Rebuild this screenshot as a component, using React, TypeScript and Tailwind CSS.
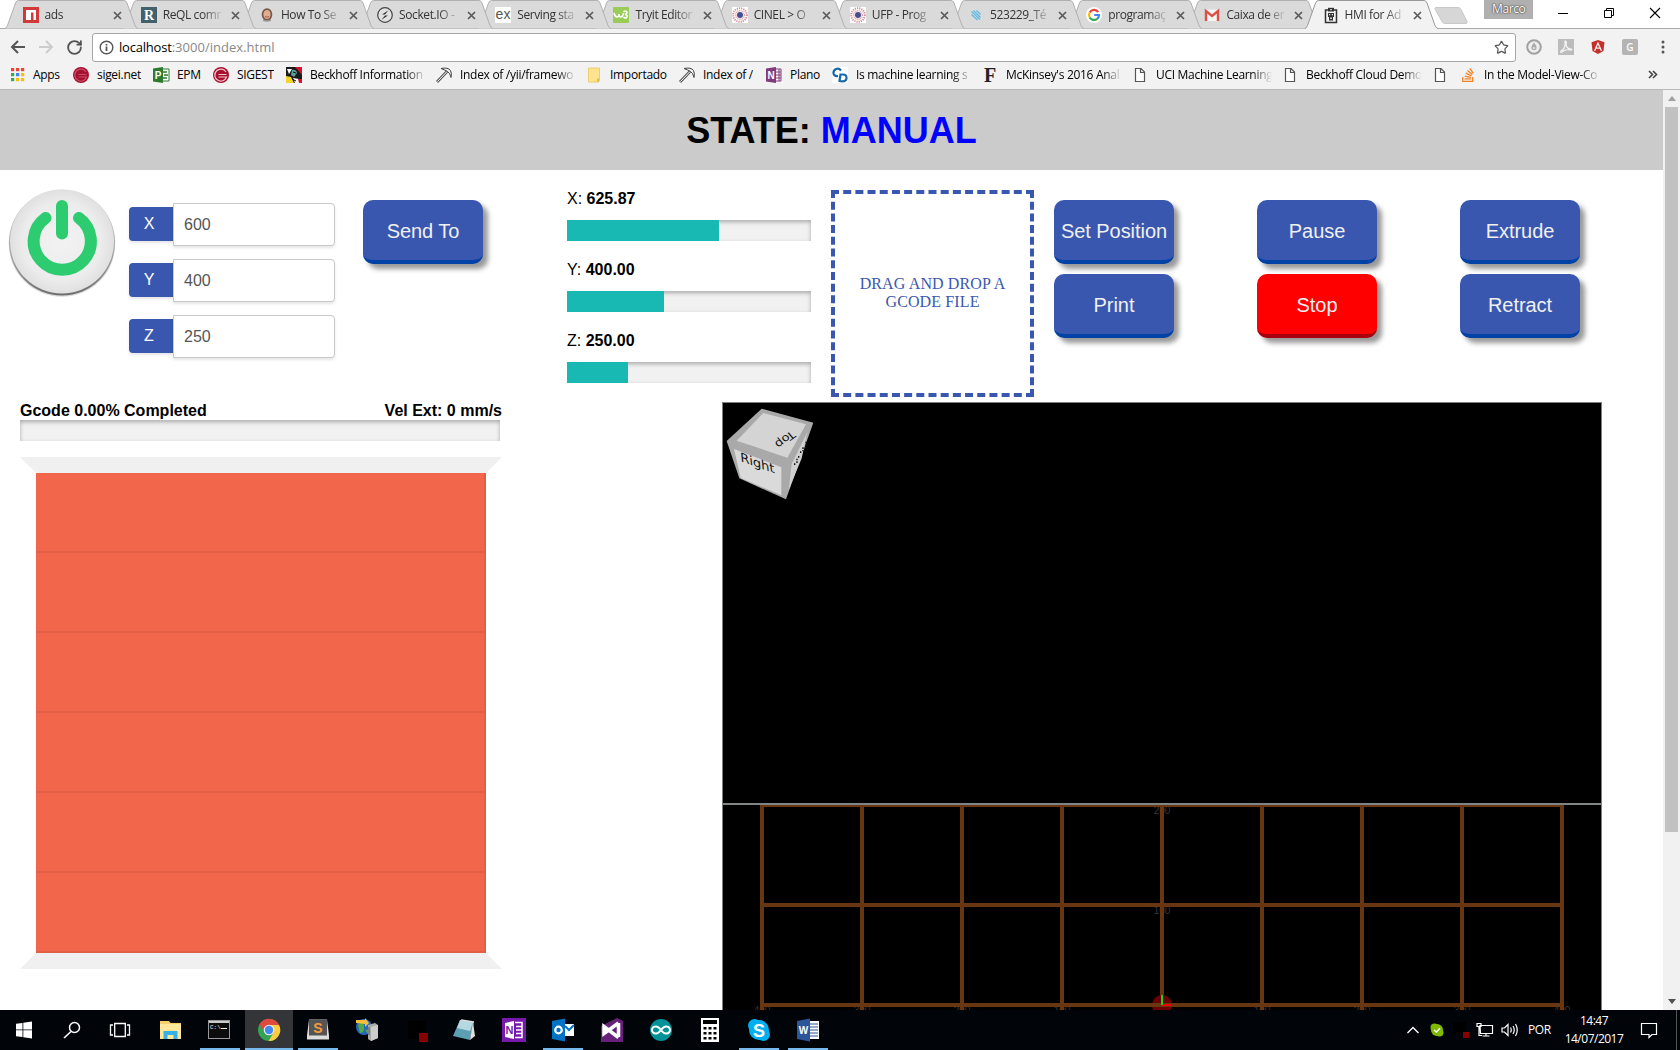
import React from "react";
import { RotateCw, Star } from "lucide-react";
import { FaAngular, FaStackOverflow } from "react-icons/fa";

const UI = "font-['Open_Sans','Noto_Sans',sans-serif]";
const ARIAL = "font-['Liberation_Sans',Arial,sans-serif]";

/* ---------- small icons ---------- */

function Glyph({ children, size = 16, box = 16 }: { children: React.ReactNode; size?: number; box?: number }) {
  return (
    <svg width={size} height={size} viewBox={`0 0 ${box} ${box}`} className="block shrink-0 overflow-visible">
      {children}
    </svg>
  );
}

const Letter = ({ x, y, s, f, c, children, w = "700" }: { x: number; y: number; s: number; f: string; c: string; children: string; w?: string }) => (
  <text x={x} y={y} fontSize={s} fontFamily={f} fontWeight={w} fill={c} textAnchor="middle">
    {children}
  </text>
);

const SANS = "Liberation Sans, sans-serif";
const SERIF = "Liberation Serif, serif";

const Npm = () => (
  <Glyph>
    <rect width="16" height="16" fill="#d2393b" />
    <path d="M3 3h10v10h-2.500V5.500H8V13H3z" fill="#fff" />
  </Glyph>
);
const Rethink = () => (
  <Glyph>
    <rect width="16" height="16" fill="#41626d" />
    <Letter x={8} y={13} s={14} f={SERIF} c="#fff">R</Letter>
  </Glyph>
);
const Face = () => (
  <Glyph>
    <ellipse cx="8" cy="7.500" rx="5.300" ry="6.300" fill="#7a5846" />
    <ellipse cx="8" cy="7.500" rx="3.600" ry="4.600" fill="#e0ad92" />
    <path d="M4 12q4 3 8 0v2q-4 1.500-8 0z" fill="#999" />
    <path d="M6 9.500q2 1.500 4 0" stroke="#a85550" fill="none" />
  </Glyph>
);
const SocketIcon = () => (
  <Glyph>
    <circle cx="8" cy="8" r="7.300" fill="#e2e2e2" stroke="#444" strokeWidth="1.200" />
    <path d="M11.500 3.200 5 7.600h3z M4.500 12.800 11 8.400H8z" fill="#333" />
  </Glyph>
);
const Express = () => (
  <Glyph>
    <rect width="16" height="16" fill="#fff" />
    <Letter x={8} y={12} s={14} f={SANS} c="#555" w="400">ex</Letter>
  </Glyph>
);
const W3 = () => (
  <Glyph>
    <rect width="16" height="16" rx="1" fill="#99cc57" />
    <path d="M1 6q1 4 3 4t2-3q0 3 2 3t2.500-4M10.500 5q2-2 3.500 0 0 2-2 2.500 3 .5 2 2.500-1.500 2-3.500 0" fill="none" stroke="#fff" strokeWidth="1.600" />
  </Glyph>
);
const Ufp = () => (
  <Glyph>
    <rect width="16" height="16" fill="#fff" />
    <circle cx="8" cy="8" r="6.800" fill="none" stroke="#d78d99" strokeWidth="2" strokeDasharray="1.200 1" />
    <circle cx="8" cy="8" r="4.300" fill="none" stroke="#e2a5ad" strokeWidth="1.600" strokeDasharray="1 .7" />
    <circle cx="8" cy="8" r="3" fill="#434f8e" />
  </Glyph>
);
const BlueHatch = () => (
  <Glyph>
    <path d="M3.500 7.500l6 5.500M3.500 4.500l8.500 8M5.500 3.500l7 7M8.500 3.500l4 4" stroke="#5fbbe4" strokeWidth="1.300" />
  </Glyph>
);
const GoogleG = () => (
  <Glyph>
    <circle cx="8" cy="8" r="8" fill="#fff" />
    <path d="M12.200 5A5 5 0 0 0 3.700 5.500" fill="none" stroke="#ea4335" strokeWidth="2.200" />
    <path d="M3.700 5.500a5 5 0 0 0 0 5" fill="none" stroke="#fbbc05" strokeWidth="2.200" />
    <path d="M3.700 10.500a5 5 0 0 0 7.500 1.300" fill="none" stroke="#34a853" strokeWidth="2.200" />
    <path d="M11.200 11.800A5 5 0 0 0 13 8H8.200" fill="none" stroke="#4285f4" strokeWidth="2.200" />
  </Glyph>
);
const Gmail = () => (
  <Glyph>
    <rect x="1" y="2.500" width="14" height="11.500" fill="#f5f5f5" />
    <path d="M2 14V4l6 5 6-5v10" fill="none" stroke="#dd5145" strokeWidth="2.400" />
  </Glyph>
);
const HmiIcon = () => (
  <Glyph>
    <path d="M2.500 3h11v12.500h-11z" fill="#f2f2f2" stroke="#333" strokeWidth="1.500" />
    <path d="M5 .8h6v3.700H5z" fill="#333" />
    <path d="M7.300 2h1.400v1.200H7.300z" fill="#f2f2f2" />
    <path d="M5 6h6v4H5zM6 10h4v3.500H6z" fill="#333" />
    <path d="M6 7h1.200v1.200H6zM8.800 7H10v1.200H8.800zM7.200 10.500h1.600v1.500H7.200z" fill="#f2f2f2" />
  </Glyph>
);

const AppsGrid = () => (
  <Glyph>
    {["#ea4335", "#ea4335", "#ea4335", "#34a853", "#4285f4", "#fbbc05", "#34a853", "#fbbc05", "#fbbc05"].map((c, i) => (
      <rect key={i} x={2 + (i % 3) * 5} y={1 + Math.floor(i / 3) * 5} width="3.200" height="3.200" fill={c} />
    ))}
  </Glyph>
);
const Sigei = ({ light = false }: { light?: boolean }) => (
  <Glyph>
    <circle cx="8" cy="8" r="8" fill="#a8102f" />
    <path d="M13 5A6 6 0 1 0 13.500 10H5.500" fill="none" stroke={light ? "#f2c8cf" : "#c4506a"} strokeWidth="1.200" />
    <path d="M5.500 7.500h8" stroke={light ? "#f2c8cf" : "#c4506a"} />
  </Glyph>
);
const Project = () => (
  <Glyph>
    <path d="M9 2h7v12H9z" fill="#fff" stroke="#2b7a2e" />
    <path d="M10 5h4M11 8h4M10 11h4" stroke="#2b7a2e" strokeWidth="1.600" />
    <path d="M0 1.500 10 0v16L0 14.500z" fill="#2b7a2e" />
    <Letter x={5} y={12} s={10} f={SANS} c="#fff">P</Letter>
  </Glyph>
);
const Beckhoff = () => (
  <Glyph>
    <rect width="16" height="16" fill="#1a1a1a" />
    <path d="M9 0h7v8z" fill="#d8122c" />
    <path d="M0 9l5 1 3 6H0z" fill="#f2d22b" />
    <path d="M1 2h5l-3 5zM7 11l6 1 2 4H9z" fill="#fff" />
    <path d="M6 3q4-1 5 3l-3 4-3-2z" fill="#58a29a" />
    <path d="M7 5l3 1M6 12l4 2" stroke="#111" />
    <path d="M12 12h4v4h-3z" fill="#d8122c" />
  </Glyph>
);
const Pickaxe = () => (
  <Glyph>
    <path d="M1 15 11 4.500" stroke="#555" strokeWidth="2.800" />
    <path d="M1.300 14.700 11 4.500" stroke="#fff" strokeWidth="1" />
    <path d="M5 1.500Q12 0 14.500 3.500q1.500 3 .5 7-1-4.500-3.500-6T5 1.500z" fill="#eee" stroke="#444" />
  </Glyph>
);
const Folder = () => (
  <Glyph>
    <path d="M2.500 1h11v11l-1 3h-10z" fill="#ffe38f" stroke="#e9c65c" strokeWidth=".8" />
    <path d="M13.500 11.500h-2.500V15h2z" fill="#e9bd45" />
  </Glyph>
);
const OneNote = ({ fill = "#80397b" }: { fill?: string }) => (
  <Glyph>
    <path d="M9 2h6v12H9z" fill="#fff" stroke={fill} />
    <path d="M10 5h5M10 8h5M10 11h5M13 2v12" stroke={fill} />
    <path d="M0 1.500 10 0v16L0 14.500z" fill={fill} />
    <Letter x={5} y={12} s={10} f={SANS} c="#fff">N</Letter>
  </Glyph>
);
const CdIcon = () => (
  <Glyph>
    <rect width="16" height="16" fill="#fff" />
    <path d="M9 3.500Q7 1 4 2 1 3.500 1.500 6.500 2.200 9.500 6 9" fill="none" stroke="#1668a9" strokeWidth="2.200" />
    <path d="M8.500 7.500l-1 6.500q6 1.500 7-2.500.3-4-3.500-4z" fill="none" stroke="#1668a9" strokeWidth="2.200" />
  </Glyph>
);
const FIcon = () => (
  <Glyph>
    <Letter x={8} y={15} s={20} f={SERIF} c="#222">F</Letter>
  </Glyph>
);
const Doc = () => (
  <Glyph>
    <path d="M3.500 1.500h5.500l3.500 3.500v9.500h-9zM8.500 1.500v4h4" fill="#fff" stroke="#555" strokeWidth="1.200" />
  </Glyph>
);

/* ---------- browser chrome ---------- */

const tabs = [
  { title: "ads", icon: <Npm /> },
  { title: "ReQL comr", icon: <Rethink /> },
  { title: "How To Se", icon: <Face /> },
  { title: "Socket.IO -", icon: <SocketIcon /> },
  { title: "Serving sta", icon: <Express /> },
  { title: "Tryit Editor", icon: <W3 /> },
  { title: "CINEL > O", icon: <Ufp /> },
  { title: "UFP - Prog", icon: <Ufp /> },
  { title: "523229_Té", icon: <BlueHatch /> },
  { title: "programaç", icon: <GoogleG /> },
  { title: "Caixa de er", icon: <Gmail /> },
  { title: "HMI for Ad", icon: <HmiIcon />, active: true },
];

function Tab({ title, icon, active, z }: { title: string; icon: React.ReactNode; active?: boolean; z: number }) {
  return (
    <div className="relative h-[29px] w-[118.200px] shrink-0" style={{ zIndex: active ? 30 : z }}>
      <svg className="absolute left-0 top-0 overflow-visible" width="133" height="29">
        <path
          d="M0 28.500Q1.500 28 2.500 25.500L10.500 3Q11.500.5 13.500.5H119Q121 .5 122 3L130 25.500Q131 28 133 28.500"
          fill={active ? "#f2f2f2" : "#dadada"}
          stroke={active ? "#999" : "#b0b0b0"}
        />
        {active && <path d="M1 28.700H132" stroke="#f2f2f2" strokeWidth="1.600" />}
      </svg>
      <div className="relative flex h-[29px] items-center gap-[6px] pl-[17.500px] pt-px">
        {icon}
        <span className="w-[61px] overflow-hidden whitespace-nowrap text-[12px] tracking-[-0.400px] text-[#333] [mask-image:linear-gradient(to_right,black_65%,transparent)]">
          {title}
        </span>
        <svg width="9" height="9" viewBox="0 0 9 9" className="ml-px shrink-0">
          <path d="M1 1l7 7M8 1L1 8" stroke="#5a5a5a" strokeWidth="1.700" />
        </svg>
      </div>
    </div>
  );
}

const bookmarks = [
  { t: "Apps", i: <AppsGrid />, w: "w-[64px]" },
  { t: "sigei.net", i: <Sigei />, w: "w-[80px]" },
  { t: "EPM", i: <Project />, w: "w-[60px]" },
  { t: "SIGEST", i: <Sigei light />, w: "w-[73px]" },
  { t: "Beckhoff Information", i: <Beckhoff />, w: "w-[150px]", fade: true },
  { t: "Index of /yii/framewo", i: <Pickaxe />, w: "w-[150px]", fade: true },
  { t: "Importado", i: <Folder />, w: "w-[93px]" },
  { t: "Index of /", i: <Pickaxe />, w: "w-[87px]" },
  { t: "Plano", i: <OneNote />, w: "w-[66px]" },
  { t: "Is machine learning s", i: <CdIcon />, w: "w-[150px]", fade: true },
  { t: "McKinsey's 2016 Anal", i: <FIcon />, w: "w-[150px]", fade: true },
  { t: "UCI Machine Learning", i: <Doc />, w: "w-[150px]", fade: true },
  { t: "Beckhoff Cloud Demo", i: <Doc />, w: "w-[150px]", fade: true },
  { t: "", i: <Doc />, w: "w-[28px]" },
  { t: "In the Model-View-Co", i: <FaStackOverflow size={16} color="#f48024" />, w: "w-[150px]", fade: true },
];

function Browser() {
  return (
    <div className={`${UI} h-[90px] bg-[#f2f2f2]`}>
      <div className="flex h-[29px] border-b border-[#adadad] bg-white pl-[5px]">
        {tabs.map((t, i) => (
          <Tab key={i} {...t} z={20 - i} />
        ))}
        <svg width="36" height="20" className="ml-[10px] mt-[6px] shrink-0">
          <path d="M2.500 1.500H25q2 0 3 2l6 12q.5 2-1 2H12q-2 0-3-2L2 3z" fill="#d6d6d6" stroke="#c8c8c8" />
        </svg>
        <div className="ml-[15px] h-[19px] w-[49px] bg-[#b0b0b0] text-center text-[12px] leading-[18px] tracking-[-0.400px] text-white [text-shadow:0_0_1px_#333,0_0_2px_#333]">
          Marco
        </div>
        <div className="ml-[24px] mt-[7px] flex gap-[34px]">
          <svg width="12" height="12"><path d="M1 6.500h10" stroke="#000" /></svg>
          <svg width="12" height="12"><path d="M1.500 3.500h7v7h-7zM3.500 3.500v-2h7v7h-2" fill="none" stroke="#000" /></svg>
          <svg width="12" height="12"><path d="M1 1l10 10M11 1L1 11" stroke="#000" strokeWidth="1.100" /></svg>
        </div>
      </div>
      <div className="flex h-[36px] items-center">
        <svg width="92" height="32" className="shrink-0" fill="none" strokeWidth="2">
          <path d="M25 16H12M18 10l-6 6 6 6" stroke="#555" />
          <path d="M39 16h13M46 10l6 6-6 6" stroke="#ccc" />
        </svg>
        <RotateCw size={17} strokeWidth={2.600} color="#555" className="-ml-[26px] shrink-0" />
        <div className="ml-[9px] flex h-[29px] w-[1424px] items-center rounded-[3px] border border-[#a6a6a6] bg-white pl-[6px] pr-[6px]">
          <svg width="15" height="15" fill="none" stroke="#555" strokeWidth="1.400">
            <circle cx="7.500" cy="7.500" r="6.300" />
            <path d="M7.500 6.500V11M7.500 4v1.500" strokeWidth="1.800" />
          </svg>
          <span className="ml-[5px] grow pt-px text-[13px] tracking-[0.020px] text-[#888]">
            <span className="tracking-[-0.200px] text-black">localhost</span>:3000/index.html
          </span>
          <Star size={15} strokeWidth={1.900} color="#555" />
        </div>
        <div className="ml-[10px] flex items-center gap-[16px]">
          <svg width="16" height="16"><circle cx="8" cy="8" r="6.800" fill="#eee" stroke="#a0a0a0" strokeWidth="2" /><path d="M8 3.500q4 5 2 7-2 1.500-4 0-2-2 2-7z" fill="#aaa" /><circle cx="8" cy="9" r="1" fill="#eee" /></svg>
          <svg width="16" height="16"><rect width="16" height="16" fill="#bcbcbc" /><path d="M7 2q2 0 1 4 1 4 5 4 2 1-1 1-5-1-8 2-2 1-1-1 5-3 4-10z" fill="none" stroke="#f5f5f5" strokeWidth="1.200" /></svg>
          <FaAngular size={16} color="#c4302b" />
          <div className="flex size-4 items-center justify-center rounded-[2px] bg-[#b4b4b4] text-[10px] font-semibold text-white">G</div>
          <svg width="16" height="16" fill="#555"><circle cx="9" cy="3" r="1.500" /><circle cx="9" cy="8" r="1.500" /><circle cx="9" cy="13" r="1.500" /></svg>
        </div>
      </div>
      <div className="flex h-[25px] items-center border-b border-[#b8b8b8] pb-[5px] pl-[9px]">
        {bookmarks.map((b, i) => (
          <div key={i} className={`${b.w} flex shrink-0 items-center gap-[8px]`}>
            {b.i}
            <span
              className={`overflow-hidden whitespace-nowrap text-[12px] tracking-[-0.300px] text-black ${
                b.fade ? "w-[116px] [mask-image:linear-gradient(to_right,black_83%,transparent)]" : ""
              }`}
            >
              {b.t}
            </span>
          </div>
        ))}
        <svg width="10" height="9" className="ml-[38px]" fill="none" stroke="#444" strokeWidth="1.600"><path d="M1 1l3.500 3.500L1 8M5 1l3.500 3.500L5 8" /></svg>
      </div>
    </div>
  );
}

/* ---------- HMI page ---------- */

function PowerButton() {
  return (
    <svg width="112" height="114" className="ml-[6px] mt-[17px]">
      <defs>
        <linearGradient id="rim" x1="0" y1="0" x2="0" y2="1">
          <stop offset="0" stopColor="#e2e2e2" />
          <stop offset=".6" stopColor="#a5a5a5" />
          <stop offset="1" stopColor="#6d6d6d" />
        </linearGradient>
        <radialGradient id="disc">
          <stop offset="0" stopColor="#f2f2f2" />
          <stop offset=".75" stopColor="#ececec" />
          <stop offset="1" stopColor="#e0e0e0" />
        </radialGradient>
      </defs>
      <circle cx="56" cy="56.500" r="53.300" fill="#ccc" opacity=".7" />
      <circle cx="56" cy="55.500" r="53" fill="url(#rim)" />
      <circle cx="56" cy="54.500" r="52" fill="url(#disc)" />
      <path d="M39.500 32.500A28.600 28.600 0 1 0 73 32.500M56 20.500V48" transform="translate(0 -1.500)" fill="none" stroke="#2ecc71" strokeWidth="12" strokeLinecap="round" />
    </svg>
  );
}

function Field({ axis, value }: { axis: string; value: string }) {
  return (
    <div className="flex h-[43px] items-center">
      <div className="-mt-px flex h-[34px] w-[44px] items-center justify-center rounded-l-[4px] bg-[#3a57af] pr-[4px] text-[16px] text-white shadow-[0_2px_3px_rgba(0,0,0,.1)]">
        {axis}
      </div>
      <div className="flex h-[43px] w-[162px] items-center rounded-r-[4px] border border-[#c8c8c8] bg-white pl-[10px] text-[16px] text-[#555] shadow-[0_2px_3px_rgba(0,0,0,.1)]">
        {value}
      </div>
    </div>
  );
}

function Btn({ label, red }: { label: string; red?: boolean }) {
  return (
    <button
      className={`h-[64px] w-[120px] whitespace-nowrap rounded-[10px] border-b-4 pt-[2px] text-[20px] tracking-[-0.050px] text-[#f0f0f0] shadow-[5px_5px_5px_#999] ${
        red ? "border-[#a8000f] bg-[#ff0000]" : "border-[#0042a6] bg-[#3a57af]"
      }`}
    >
      {label}
    </button>
  );
}

function Gauge({ axis, value, fill }: { axis: string; value: string; fill: number }) {
  return (
    <div className="h-[71px]">
      <div className="h-[32px] pt-px text-[16px] leading-[20px]">
        {axis}: <b>{value}</b>
      </div>
      <div className="h-[21px] w-[244px] bg-[#f1f1f1] shadow-[inset_0_2px_4px_rgba(0,0,0,.3)]">
        <div className="h-full bg-[#18b9b3]" style={{ width: fill }} />
      </div>
    </div>
  );
}

function OrientationCube() {
  return (
    <svg width="100" height="100" viewBox="69 39 300 300" className="block" fontFamily="DejaVu Sans, sans-serif">
      <path d="M80 153 185 56 340 98 258 328 118 265z" fill="#a9a9a9" />
      <path d="M190 69 318 103 262 203 110 152z" fill="#d4d4d4" />
      <path d="M102 177 244 232V316L122 264z" fill="#dadada" />
      <path d="M322 126 275 222 266 300 305 205z" fill="#d0d0d0" />
      <text transform="matrix(1.03 .36 .1 1 122 214)" fontSize="38" fill="#111">Right</text>
      <text transform="matrix(-.85 .62 -.6 -.72 274 121)" fontSize="36" fill="#111">Top</text>
      <path d="M318 155v20M309 172v12M302 184v8M296 198v6M291 206v14M284 220v6" stroke="#111" strokeWidth="4" strokeDasharray="5 3" />
    </svg>
  );
}

function Viewer() {
  return (
    <div className="flex h-[608px] w-[880px] flex-col border border-b-0 border-[#808080] bg-black">
      <div className="h-[400px] shrink-0 border-b border-transparent">
        <OrientationCube />
      </div>
      <svg width="878" height="207" className="block">
        <rect x="0" y="0" width="878" height="2" fill="#808484" />
        <g fill="#363636" fontSize="10" fontFamily={SANS} textAnchor="middle">
          <text x="439" y="11">200</text>
          <text x="439" y="111">100</text>
          {[400, 300, 200, 100, 0, 100, 200, 300, 400].map((n, i) => (
            <text key={i} x={39 + i * 100} y="211">{n}</text>
          ))}
        </g>
        <g fill="#693612">
          {[0, 1, 2, 3, 4, 5, 6, 7, 8].map((i) => (
            <rect key={i} x={37 + i * 100} y="2" width="4" height="205" />
          ))}
          <rect x="37" y="2" width="804" height="2" />
          <rect x="37" y="100" width="804" height="4" />
        </g>
        <circle cx="439" cy="202" r="10" fill="#6b0000" />
        <rect x="37" y="200" width="804" height="4" fill="#693612" />
        <rect x="439" y="201" width="10" height="2" fill="#e00" />
        <rect x="438" y="192" width="2" height="10" fill="#1fd01f" />
      </svg>
    </div>
  );
}

function Page() {
  return (
    <div className={`${ARIAL} flex h-[920px] bg-white text-black`}>
      <div className="h-[920px] w-[1663px] overflow-hidden">
        <h1 className="flex h-[80px] items-center justify-center bg-[#cbcbcb] pt-[2px] text-[36px] font-bold">
          <span>
            STATE: <span className="text-[#0000ff]">MANUAL</span>
          </span>
        </h1>
        <div className="grid h-[232px] grid-cols-[129px_234px_204px_264px_223px_1fr]">
          <PowerButton />
          <div className="flex flex-col gap-[13px] pt-[33px]">
            <Field axis="X" value="600" />
            <Field axis="Y" value="400" />
            <Field axis="Z" value="250" />
          </div>
          <div className="pt-[30px]">
            <Btn label="Send To" />
          </div>
          <div className="pt-[18px]">
            <Gauge axis="X" value="625.87" fill={152} />
            <Gauge axis="Y" value="400.00" fill={97} />
            <Gauge axis="Z" value="250.00" fill={61} />
          </div>
          <div className="mt-[20px] flex h-[207px] w-[203px] items-center justify-center border-4 border-dashed border-[#3a57af] px-[16px] pb-px text-center font-['Liberation_Serif',serif] text-[16px] leading-[18px] tracking-[0.120px] text-[#3a57af]">
            DRAG AND DROP A<br />GCODE FILE
          </div>
          <div className="grid auto-rows-[74px] grid-cols-[203px_203px_120px] pt-[30px]">
            <Btn label="Set Position" />
            <Btn label="Pause" />
            <Btn label="Extrude" />
            <Btn label="Print" />
            <Btn label="Stop" red />
            <Btn label="Retract" />
          </div>
        </div>
        <div className="flex pl-[20px]">
          <div className="w-[702px]">
            <div className="flex h-[18px] w-[482px] justify-between whitespace-nowrap text-[16px] font-bold leading-[17px]">
              <span>Gcode 0.00% Completed</span>
              <span>Vel Ext: 0 mm/s</span>
            </div>
            <div className="h-[21px] w-[480px] bg-[#f1f1f1] shadow-[inset_0_2px_4px_rgba(0,0,0,.3)]" />
            <div className="mt-[16px] h-[512px] w-[482px] border-[16px] border-x-transparent border-y-[#f0f0f0]">
              {[0, 1, 2, 3, 4, 5].map((i) => (
                <div key={i} className="h-[80px] border-b-2 border-r-2 border-[#e05f47] bg-[#f2664c]" />
              ))}
            </div>
          </div>
          <Viewer />
        </div>
      </div>
      <div className="flex h-[920px] w-[17px] flex-col items-center bg-[#f1f1f1]">
        <div className="flex h-[17px] items-center"><svg width="8" height="5"><path d="M0 5 4 0l4 5z" fill="#a0a0a0" /></svg></div>
        <div className="h-[725px] w-[13px] bg-[#c1c1c1]" />
        <div className="mt-auto flex h-[17px] items-center"><svg width="8" height="5"><path d="M0 0l4 5 4-5z" fill="#505050" /></svg></div>
      </div>
    </div>
  );
}

/* ---------- taskbar ---------- */

const Ico = ({ children }: { children: React.ReactNode }) => (
  <svg width="24" height="24" viewBox="0 0 24 24" className="block overflow-visible">{children}</svg>
);

const taskIcons: { run?: boolean; active?: boolean; el: React.ReactNode }[] = [
  { el: <Ico><path d="M4 5.800 10.500 4.900V11.500H4zM11.300 4.800 20 3.500v8h-8.700zM4 12.300h6.500v6.800L4 18.200zM11.300 12.300H20v8.200l-8.700-1.300z" fill="#fff" /></Ico> },
  { el: <Ico><circle cx="14.500" cy="9.500" r="5" fill="none" stroke="#fff" strokeWidth="1.500" /><path d="M11 13.500 4 20" stroke="#fff" strokeWidth="1.600" /></Ico> },
  { el: <Ico><path d="M6.700 5.500h10.600v13H6.700zM5 7H2.500v10H5M19 7h2.500v10H19" fill="none" stroke="#fff" strokeWidth="1.300" /></Ico> },
  { el: <Ico><path d="M1 3h9l1.500 2H22v16H1z" fill="#f5cf6a" /><path d="M1 6h21v15H1z" fill="#ffe69b" /><path d="M4.500 13h14v8h-4v-4h-6v4h-4z" fill="#37b1e4" /></Ico> },
  { run: true, el: <Ico><rect x=".5" y="2.500" width="21" height="18" fill="#0c0c0c" stroke="#999" /><path d="M1 3h20v2H1z" fill="#ccc" /><text x="2" y="11" fontSize="6" fill="#eee" fontFamily="Liberation Mono, monospace">C:\</text><path d="M13 10.500h6" stroke="#eee" strokeWidth="1" /></Ico> },
  { run: true, active: true, el: (
    <Ico>
      <circle cx="12" cy="12" r="11" fill="#31a352" />
      <path d="M2.500 6.500A11 11 0 0 1 22 7H12L7.500 14z" fill="#df4a3f" />
      <path d="M22 7A11 11 0 0 1 11.500 23L17 14 12 7z" fill="#fdcd41" />
      <circle cx="12" cy="12" r="5.300" fill="#f1f1f1" /><circle cx="12" cy="12" r="4.200" fill="#4688f1" />
    </Ico>) },
  { run: true, el: <Ico><path d="M3 1.500h18l2 16v4H1v-4z" fill="#ddd" /><path d="M3 1.500h18v16H3z" fill="#555" /><Letter x={12} y={14.500} s={14} f={SANS} c="#f89a3c">S</Letter></Ico> },
  { el: <Ico><circle cx="9" cy="9" r="8" fill="#2467bd" /><path d="M3 7q5-6 6 1t-4 7zM10 12l6-1-3 5z" fill="#53a943" /><path d="M1 2h9V0l4 5-4 4V6L1 5z" fill="#f7bd3d" /><path d="M13 7l7-2 3 2v13l-7 3-3-2z" fill="#aaa" /><path d="M16 9l7-2v13l-7 3z" fill="#ccc" /><path d="M14 9v8" stroke="#555" /></Ico> },
  { el: <Ico><path d="M4 3h18v18H4z" fill="#000" /><path d="M15 15h9v9h-9z" fill="#850000" /></Ico> },
  { el: <Ico><path d="M7 2l14 2-4 18L0 18z" fill="#5d9fb2" /><path d="M7 2l13 2-3 9-13-3z" fill="#b4d7e0" /><path d="M20 4l2 14-5 4z" fill="#e0e0d8" /><path d="M8 2l13 2" stroke="#ddd" strokeWidth="1.500" /></Ico> },
  { el: <Ico><path d="M0 0h24v24H0z" fill="#7719aa" /><path d="M3 5l9-2v18l-9-2z" fill="#fff" /><path d="M13 4.500h7v15h-7" fill="none" stroke="#fff" strokeWidth="1.500" /><path d="M14 8.500h6M14 12h6M14 15.500h6" stroke="#fff" strokeWidth="1.500" /><Letter x={7.500} y={16} s={11} f={SANS} c="#7719aa">N</Letter></Ico> },
  { run: true, el: <Ico><path d="M13 6h10v12H13z" fill="#fff" /><path d="M14 8l4 4 5-5" stroke="#0072c6" strokeWidth="2" fill="none" /><path d="M1 3 14 .5v23L1 21z" fill="#0072c6" /><circle cx="7.500" cy="12" r="3.300" fill="none" stroke="#fff" strokeWidth="2.200" /></Ico> },
  { el: <Ico><path d="M1 8 17 0l6 3v21H1z" fill="#68217a" /><path d="M18.500 5v14M18.500 5 4 15.500V8.500l14.500 11" fill="none" stroke="#fff" strokeWidth="3.500" /></Ico> },
  { el: <Ico><circle cx="12" cy="12" r="11" fill="#009298" /><path d="M12 12Q9 8 6.500 8.500a3.500 3.500 0 0 0 0 7Q9 16 12 12q3-4 5.500-3.500a3.500 3.500 0 0 1 0 7Q15 16 12 12z" fill="none" stroke="#fff" strokeWidth="2" /></Ico> },
  { el: <Ico><path d="M3 0h18v24H3z" fill="#fff" /><path d="M5 2h14v4H5z" fill="#000" />{[0, 1, 2].map((r) => [0, 1, 2].map((c) => <rect key={`${r}${c}`} x={5.500 + c * 5} y={9 + r * 5} width="3" height="2.500" fill="#000" />))}</Ico> },
  { run: true, el: <Ico><circle cx="7.500" cy="7.500" r="6.500" fill="#00aff0" /><circle cx="16.500" cy="16.500" r="6.500" fill="#00aff0" /><circle cx="12" cy="12" r="10" fill="#00aff0" /><Letter x={12} y={18.500} s={18} f={SANS} c="#fff">S</Letter></Ico> },
  { run: true, el: <Ico><path d="M13 3h10v18H13z" fill="#fff" /><path d="M14 6h8M14 9h8M14 12h8M14 15h8M14 18h8" stroke="#2b579a" /><path d="M1 3 14 .5v23L1 21z" fill="#2b579a" /><Letter x={7.500} y={16} s={10} f={SANS} c="#fff">W</Letter></Ico> },
];

function Taskbar() {
  return (
    <div className={`${UI} flex h-[40px] bg-[#010409] text-white`}>
      {taskIcons.map((t, i) => (
        <div
          key={i}
          className={`flex h-[40px] w-[48px] shrink-0 flex-col items-center justify-between ${i === 3 ? "ml-[3px]" : i > 3 ? "ml-px" : ""} ${
            t.active ? "bg-[#343539]" : ""
          }`}
        >
          <div className="pt-[8px]">{t.el}</div>
          {t.run && <div className={`h-[2px] bg-[#76b9ed] ${t.active ? "w-full" : "w-[40px]"}`} />}
        </div>
      ))}
      <div className="ml-auto flex items-center">
        <svg width="14" height="16"><path d="M1.500 11 7 5.500l5.500 5.500" fill="none" stroke="#fff" strokeWidth="1.400" /></svg>
        <svg width="14" height="14" className="ml-[10px]"><circle cx="4.500" cy="4.500" r="4" fill="#7fba00" /><circle cx="9.500" cy="9.500" r="4" fill="#7fba00" /><circle cx="7" cy="7" r="6" fill="#7fba00" /><path d="M4 7l2.300 2L10 5.200" stroke="#fff" strokeWidth="1.500" fill="none" /></svg>
        <svg width="16" height="16" className="ml-[9px]"><path d="M0 0h13v12H0z" fill="#000" /><path d="M10 10h6v6h-6z" fill="#850000" /></svg>
        <svg width="18" height="16" className="ml-[7px]" fill="none" stroke="#fff" strokeWidth="1.200"><path d="M4 3.500h12.500v8H4.500zM10 11.500v2.500M6.500 14h7M1 1.500h4v3H1zM3 5v8.500h3" /></svg>
        <svg width="18" height="16" className="ml-[7px]" fill="none" stroke="#fff" strokeWidth="1.200"><path d="M1 6h2.500L7 2.500v11L3.500 10H1zM9.500 5.500q1.500 2.500 0 5M12 4q2.500 4 0 8M14.500 2q3.500 6 0 12" /></svg>
        <span className="ml-[9px] w-[24px] text-[12px] tracking-[-0.400px]">POR</span>
        <div className="ml-[10px] w-[64px] text-center text-[12px] leading-[18px] tracking-[-0.500px]">
          <div>14:47</div>
          <div>14/07/2017</div>
        </div>
        <svg width="18" height="18" className="ml-[14px]"><path d="M1.500 2.500h15v11h-4.500L9 16.500V13.500H1.500z" fill="none" stroke="#fff" strokeWidth="1.200" /></svg>
        <div className="ml-[18px] mr-[3px] h-[40px] w-px bg-[#555]" />
      </div>
    </div>
  );
}

export default function App() {
  return (
    <div className="h-[1050px] w-[1680px] overflow-hidden bg-white">
      <Browser />
      <Page />
      <Taskbar />
    </div>
  );
}
